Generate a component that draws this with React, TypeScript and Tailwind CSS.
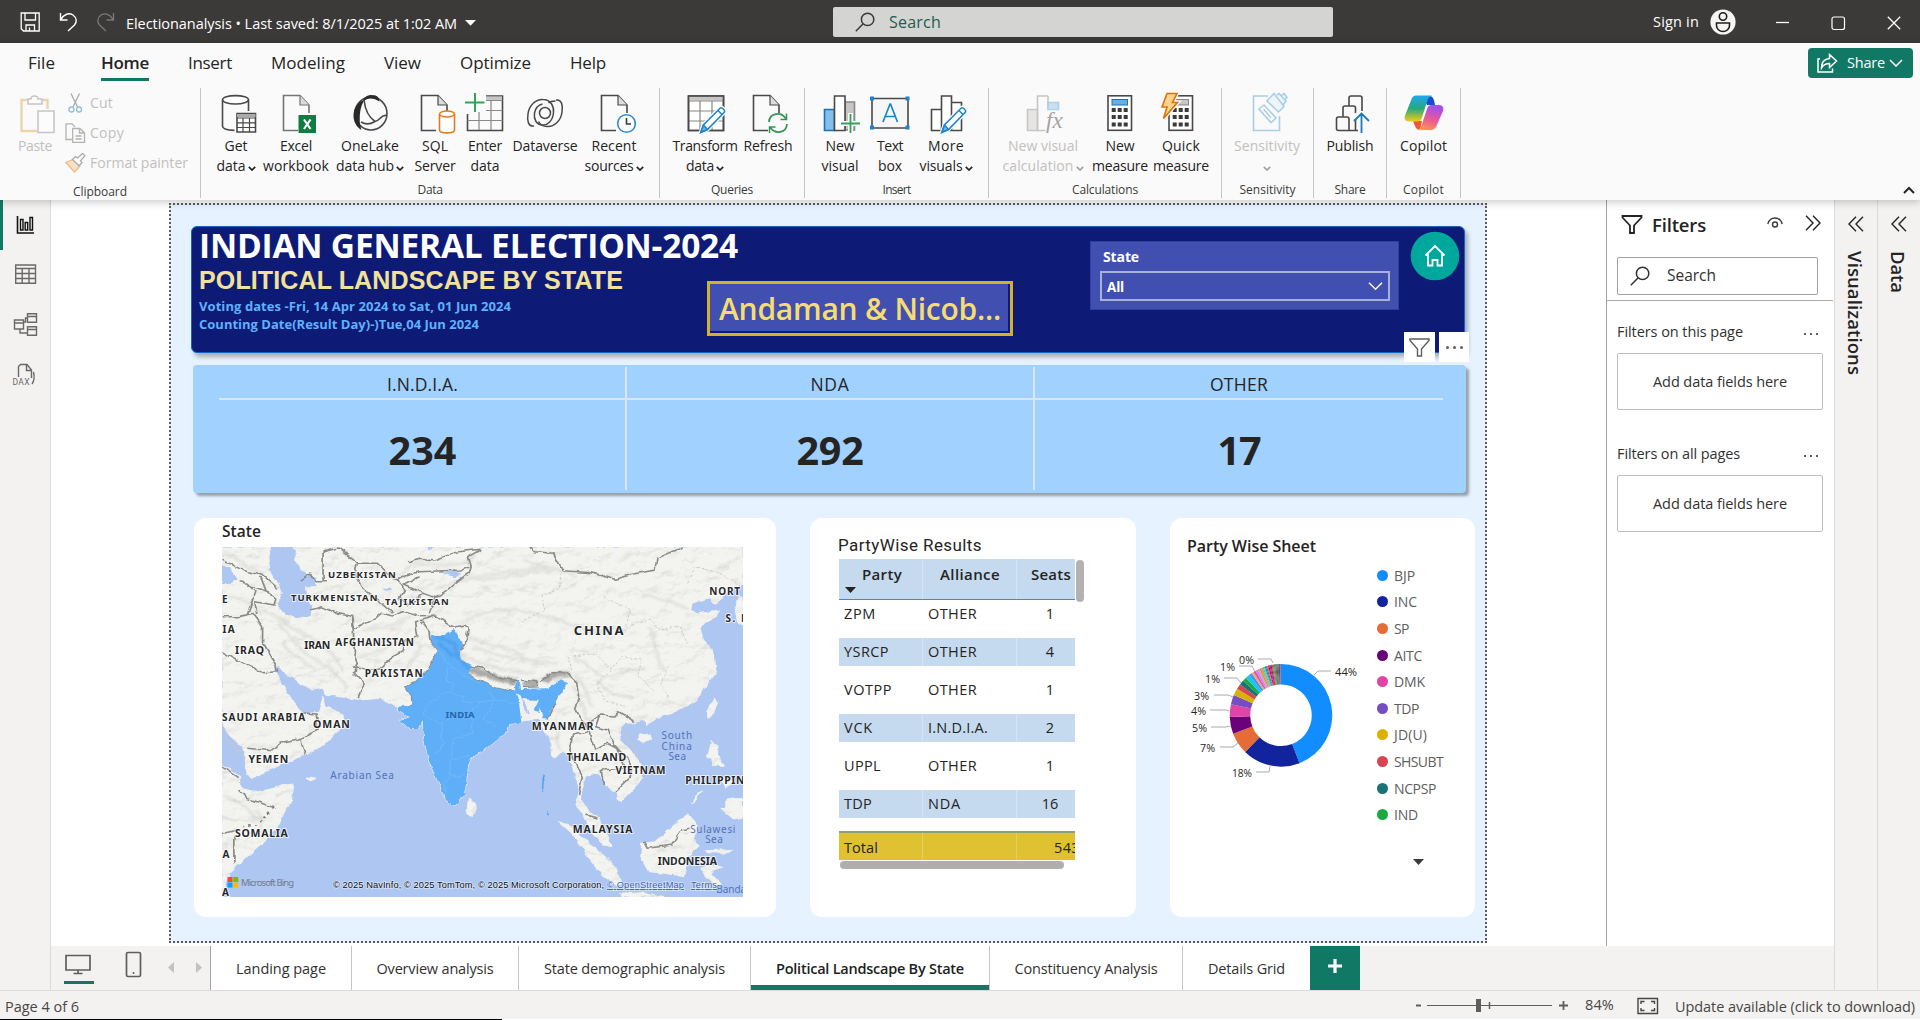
import { useLayoutEffect, useRef } from "react";
import type { ReactNode } from "react";

/* Text whose tracking is tuned so that it spans exactly `w` pixels. */
function Fit({ w, className = "", children }: { w: number; className?: string; children: string }) {
  const ref = useRef<HTMLSpanElement>(null);
  useLayoutEffect(() => {
    const el = ref.current;
    if (!el) return;
    el.style.letterSpacing = "0px";
    const vertical = getComputedStyle(el).writingMode !== "horizontal-tb";
    const box = el.getBoundingClientRect();
    const natural = vertical ? box.height : box.width;
    el.style.letterSpacing = `${(w - natural) / children.length}px`;
  }, [w, children]);
  return (
    <span ref={ref} className={`inline-block w-max shrink-0 whitespace-pre ${className}`}>
      {children}
    </span>
  );
}

const Chev = ({ className = "" }: { className?: string }) => (
  <svg className={`inline-block h-[5px] w-[8px] ${className}`} viewBox="0 0 8 5" fill="none" stroke="currentColor" strokeWidth="1.7">
    <path d="M.8 .8 4 4 7.2 .8" />
  </svg>
);

const Magnifier = ({ className = "" }: { className?: string }) => (
  <svg className={`h-5 w-5 ${className}`} viewBox="0 0 20 20" fill="none" stroke="currentColor" strokeWidth="1.5">
    <circle cx="12.6" cy="7.4" r="6.2" />
    <path d="M8.2 11.8 .8 19.2" />
  </svg>
);

/* ---------- title bar ---------- */
function TitleBar() {
  return (
    <div className="flex h-[43px] shrink-0 items-center bg-[#3b3a38] text-white">
      <svg className="ml-[20px] h-5 w-[21px]" viewBox="0 0 21 20" fill="none" stroke="#fff" strokeWidth="1.3">
        <path d="M1.2 1h18v18H3.5l-2.3-2.3zM5 1v7h10.500V1M6 19v-6h8.500v6M9.500 19v-3.500" />
      </svg>
      <svg className="ml-[18px] h-[20px] w-[19px]" viewBox="0 0 19 20" fill="none" stroke="#fff" strokeWidth="1.4">
        <path d="M1.500 1v7h7M1.800 7.700C5 2 10 .5 14 3c4 3 4 7 1.500 10L9 19" />
      </svg>
      <svg className="ml-[18px] h-[20px] w-[19px]" viewBox="0 0 19 20" fill="none" stroke="#7a7977" strokeWidth="1.3">
        <path d="M17.500 1v7h-7M17.200 7.700C14 2 9 .5 5 3c-4 3-4 7-1.500 10L10 19" />
      </svg>
      <Fit w={331} className="mt-[4px] ml-[11px] text-[14.500px]">Electionanalysis • Last saved: 8/1/2025 at 1:02 AM</Fit>
      <svg className="mt-[2px] ml-[8px] h-[6px] w-[11px]" viewBox="0 0 11 6"><path d="M0 0h11L5.500 5.800z" fill="#fff" /></svg>
      <div className="ml-[357px] flex h-[30px] w-[500px] items-center rounded-[2px] bg-[#d4d4d2] text-[#3b3a39]">
        <Magnifier className="ml-[22px]" />
        <Fit w={52} className="mt-[1px] ml-[14px] text-[16px] text-[#215c50]">Search</Fit>
      </div>
      <Fit w={46} className="ml-[320px] text-[14.500px]">Sign in</Fit>
      <svg className="ml-[11px] h-[26px] w-[26px]" viewBox="0 0 26 26">
        <circle cx="13" cy="13" r="12.600" fill="#f6f5f4" />
        <g fill="none" stroke="#1f1e1d" strokeWidth="1.600">
          <circle cx="13" cy="7.500" r="3.700" />
          <path d="M6.500 14h13v2.500a6.500 6 0 0 1-13 0z" />
        </g>
      </svg>
      <svg className="ml-[40px] h-[14px] w-[14px]" viewBox="0 0 14 14" stroke="#fff" strokeWidth="1.300"><path d="M0 7.500h13" /></svg>
      <svg className="mt-[3px] ml-[41px] h-[15px] w-[15px]" viewBox="0 0 15 15" fill="none" stroke="#fff" strokeWidth="1.200"><rect x="1" y="1" width="12.500" height="12.500" rx="2" /></svg>
      <svg className="mt-[3px] ml-[41px] h-[14px] w-[14px]" viewBox="0 0 14 14" stroke="#fff" strokeWidth="1.300"><path d="m.8.8 12.400 12.400M13.200.8.8 13.200" /></svg>
    </div>
  );
}

/* ---------- ribbon ---------- */
function MenuRow() {
  return (
    <div className="flex h-[41px] items-start text-[17px] leading-[40px] text-[#252423]">
      <Fit w={27} className="ml-[28px]">File</Fit>
      <div className="ml-[46px] flex flex-col">
        <Fit w={48} className="h-[35px] font-semibold">Home</Fit>
        <div className="h-[3px] w-[48px] bg-[#117865]" />
      </div>
      <Fit w={44} className="ml-[39px]">Insert</Fit>
      <Fit w={74} className="ml-[39px]">Modeling</Fit>
      <Fit w={37} className="ml-[39px]">View</Fit>
      <Fit w={71} className="ml-[39px]">Optimize</Fit>
      <Fit w={36} className="ml-[39px]">Help</Fit>
      <div className="mt-[5px] mr-[7px] ml-auto flex h-[30px] w-[105px] items-center rounded-[4px] bg-[#117865] text-white">
        <svg className="ml-[9px] h-[20px] w-[21px]" viewBox="0 0 21 20" fill="none" stroke="#fff" strokeWidth="1.500">
          <path d="M3 6H1v13h14.500v-3.500M12.500 1.500v4C7 6 4.500 9.500 4.500 15c2-3.500 4.500-4.500 8-4.500v4L19.500 8z" />
        </svg>
        <Fit w={38} className="ml-[9px] text-[14.500px]">Share</Fit>
        <svg className="ml-[4px] h-[8px] w-[14px]" viewBox="0 0 14 8" fill="none" stroke="#fff" strokeWidth="1.500"><path d="m1 1 6 6 6-6" /></svg>
      </div>
    </div>
  );
}

/* Icon frame, 44 by 46, centred on horizontal position c of the ribbon. */
const Ico = ({ c, children }: { c: number; children: ReactNode }) => (
  <svg className="h-[46px] w-[44px]" viewBox={`${c - 22} 90 44 46`} fill="none" stroke="#4a4948" strokeWidth="1.600">
    {children}
  </svg>
);

const Doc = ({ x, stroke = "#4a4948" }: { x: number; stroke?: string }) => (
  <g stroke={stroke}>
    <path d={`M${x + 15} 130.500H${x}.5V95.500H${x + 17}L${x + 26} 105V113`} />
    <path d={`M${x + 17} 95.500V105H${x + 26}`} fill="#dcdcdc" strokeWidth="1.200" />
  </g>
);

const Pencil = ({ x }: { x: number }) => (
  <g transform={`translate(${x} 107)`} stroke="#1b84cc" strokeWidth="1.500">
    <path d="M20.500.8c1.500-.8 5 2.500 3.800 4.500L7.500 22.500.8 25.300 3.500 18z" fill="#fff" stroke="#fafafa" strokeWidth="4" />
    <path d="M20.500.8c1.500-.8 5 2.500 3.800 4.500L7.500 22.500.8 25.300 3.500 18z" fill="#fff" />
    <path d="M3.500 18l4 4.500L.8 25.300z" fill="#74b5e8" />
    <path d="m18 3.500 4.200 4.200" />
  </g>
);

const CalcIcon = ({ x, display }: { x: number; display: string }) => (
  <g>
    <rect x={x} y="95.800" width="23.500" height="34.500" fill="#fff" />
    <rect x={x + 4} y="99.500" width="15.500" height="5.500" fill={display} stroke={display === "#c8c6c4" ? "#8a8886" : "#1b72b8"} strokeWidth="1" />
    <g stroke="none" fill="#3b3a39">
      {[108, 115, 122.500].map((y) => [4, 10, 16].map((d) => <rect key={`${y}-${d}`} x={x + d - 0.300} y={y} width="4" height="4" />))}
    </g>
  </g>
);

const PlainLabel = "leading-[20px] text-[14px]";

function Item({ box, l1, w1, l2, w2, chev, dim, children }: {
  box: string; l1: string; w1: number; l2?: string; w2?: number; chev?: boolean; dim?: boolean; children: ReactNode;
}) {
  return (
    <div className={`flex shrink-0 flex-col items-center ${box} ${dim ? "text-[#c2c0be]" : "text-[#252423]"}`}>
      {children}
      <Fit w={w1} className={PlainLabel}>{l1}</Fit>
      <div className="flex h-5 items-center justify-center gap-[2px]">
        {l2 && <Fit w={w2 ?? 30} className={PlainLabel}>{l2}</Fit>}
        {chev && <Chev className={`mt-[4px] ${dim ? "text-[#a5a3a1]" : ""}`} />}
      </div>
    </div>
  );
}

function Group({ width, label, lw, children }: { width: string; label: string; lw: number; children: ReactNode }) {
  return (
    <div className={`flex h-[110px] shrink-0 flex-col border-r border-[#c8c6c4] ${width}`}>
      <div className="mt-[2px] flex h-[93px]">{children}</div>
      <div className="flex justify-center">
        <Fit w={lw} className="text-[12px] leading-[17px] text-[#3b3a39]">{label}</Fit>
      </div>
    </div>
  );
}

function Ribbon() {
  return (
    <div className="flex h-[116px] items-start pt-[4px]">
      <Group width="w-[201px]" label="Clipboard" lw={54}>
        <div className="ml-[13px] flex w-[44px] flex-col items-center text-[#c2c0be]">
          <Ico c={35}>
            <g opacity=".4">
              <path d="M30 100H21.500v31H37M47.500 109v-9H39" stroke="#d99a3c" strokeWidth="2.400" />
              <path d="M28 104v-5h3c0-4 7-4 7 0h4v5z" stroke="#777" fill="#fff" />
              <path d="M38 111h16v21.500H38z" fill="#fff" stroke="#777" />
            </g>
          </Ico>
          <Fit w={34} className={PlainLabel}>Paste</Fit>
        </div>
        <div className="ml-[8px] flex flex-col text-[#c2c0be]">
          <div className="mt-[3px] flex h-[30px] items-start">
            <svg className="h-[20px] w-[20px]" viewBox="0 0 20 20" fill="none" stroke="#aaa" strokeWidth="1.300">
              <path d="m6 .5 6.500 13.500M14.500.5 8 14" /><g stroke="#90bfdf"><circle cx="6.500" cy="16.500" r="2.500" /><circle cx="14" cy="16.500" r="2.500" /></g>
            </svg>
            <Fit w={23} className="ml-[5px] text-[14px] leading-[19px]">Cut</Fit>
          </div>
          <div className="flex h-[30px] items-start">
            <svg className="h-[20px] w-[21px]" viewBox="0 0 21 20" fill="none" stroke="#b5b3b1" strokeWidth="1.300">
              <path d="M7.500 16.500H1V.8h6l3 3" /><path d="M7.700 5.500h7.300l4.500 4.500v9.500H7.700zM14.500 5.500V10h5M10.500 13h6M10.500 16h6" />
            </svg>
            <Fit w={34} className="ml-[4px] text-[14px] leading-[20px]">Copy</Fit>
          </div>
          <div className="flex h-[30px] items-start">
            <svg className="h-[20px] w-[21px]" viewBox="0 0 21 20" fill="none" strokeWidth="1.300">
              <path d="M.8 9.500 8 6.500l7 6.500-5.500 6z" fill="#f9e0c4" stroke="#e9bb8a" /><path d="m7.500 6.500 3-3 2 1.500 5-4.500 2.300 2.300-4.300 5 1.500 2-3 3z" fill="#fff" stroke="#aaa" />
            </svg>
            <Fit w={98} className="ml-[4px] text-[14px] leading-[20px]">Format painter</Fit>
          </div>
        </div>
      </Group>

      <Group width="w-[459px]" label="Data" lw={25}>
        <Item box="ml-[7px] w-[56px]" l1="Get" w1={23} l2="data" w2={29} chev>
          <Ico c={236}>
            <ellipse cx="235.500" cy="99.800" rx="13" ry="4.200" fill="#fff" />
            <path d="M222.500 100v26c0 3 5 4.300 12 4.400M248.500 100v11" />
            <path d="M237 113.500h18.500V132H237z" fill="#fff" /><path d="M237 114h18.500v3H237z" fill="#aaa" stroke="none" />
            <path d="M237 118h18.500M237 122.800h18.500M237 127.500h18.500M243 118v14M249.500 118v14" strokeWidth="1.200" />
          </Ico>
        </Item>
        <Item box="w-[64px]" l1="Excel" w1={32} l2="workbook" w2={66}>
          <Ico c={296}>
            <Doc x={283} stroke="#767574" />
            <path d="M298.500 115H316v18h-17.500z" fill="#107c41" stroke="none" />
            <path d="m304 119.500 6.500 9.500M310.500 119.500 304 129" stroke="#fff" strokeWidth="2.200" />
          </Ico>
        </Item>
        <Item box="ml-[6px] w-[72px]" l1="OneLake" w1={58} l2="data hub" w2={58} chev>
          <Ico c={370}>
            <ellipse cx="371" cy="113.500" rx="16" ry="16.500" />
            <path d="M364 100c1-3 5-4.500 8-4.300 3 0 6 1.500 6.500 4.300-5-3-11-3-14.500 0zM362.500 101.500c-10 5-11 20-2.500 26.500-2-7-1.500-19 2.500-26.500z" fill="#2b2a29" stroke="#2b2a29" />
            <path d="M364 100c1 9 4.500 17 11 21.500-5 3-10 3-14 .5M375 121.500c6-1.500 6-7.500 12-6" />
          </Ico>
        </Item>
        <Item box="ml-[4px] w-[50px]" l1="SQL" w1={26} l2="Server" w2={41}>
          <Ico c={435}>
            <Doc x={421} />
            <path d="M439.500 114v16c0 3.800 15 3.800 15 0v-16" fill="#fff" stroke="#e07b1c" /><ellipse cx="447" cy="114" rx="7.500" ry="3" fill="#fff" stroke="#e07b1c" />
          </Ico>
        </Item>
        <Item box="w-[50px]" l1="Enter" w1={34} l2="data" w2={29}>
          <Ico c={485}>
            <path d="M467.500 114v16.500h35V96H486" fill="none" /><path d="M486 96.500h16V100h-16z" fill="#c8c6c4" stroke="none" />
            <path d="M486 100.500h16.500M486 110.500h16.500M467.500 120.500h35M479 112v18M491 100v30" strokeWidth="1.200" stroke="#8a8886" />
            <path d="M475 93v19M465 102.500h19.500" stroke="#32a35a" strokeWidth="2" />
          </Ico>
        </Item>
        <Item box="w-[70px]" l1="Dataverse" w1={65}>
          <Ico c={545}>
            <g strokeWidth="1.500">
              <circle cx="545" cy="113" r="5.500" />
              <path d="M534 126c-6 1-7-6-6-12 1-9 8-15 15-14.500 8 0 11 7 10.500 13-.5 8-6 13-11 12.500-6 0-9-6-8-12 1-5 4-8 8-9" />
              <path d="M556 100c6-1 7 6 6 12-1 9-8 15-15 14.500-4 0-7-2-8.500-5M555.500 101c0 0-5 0-7 2" />
            </g>
          </Ico>
        </Item>
        <Item box="ml-[1px] w-[66px]" l1="Recent" w1={45} l2="sources" w2={49} chev>
          <Ico c={614}>
            <Doc x={601} />
            <circle cx="626.500" cy="123.500" r="8.800" fill="#fff" stroke="#2d8dd0" /><path d="M626.500 118v6h4.500" stroke="#3b3a39" />
          </Ico>
        </Item>
      </Group>

      <Group width="w-[145px]" label="Queries" lw={42}>
        <Item box="ml-[10px] w-[70px]" l1="Transform" w1={65} l2="data" w2={28} chev>
          <Ico c={705}>
            <path d="M688.500 96h35v34.500h-35z" fill="#fff" /><path d="M689 96.500h34v4h-34z" fill="#c8c6c4" stroke="none" />
            <path d="M688.500 101h35M688.500 111h35M688.500 121h35M700 101v29M712 101v29" stroke="#8a8886" strokeWidth="1.200" />
            <path d="M688.500 96h35v34.500h-35z" />
            <Pencil x={700} />
          </Ico>
        </Item>
        <Item box="w-[56px]" l1="Refresh" w1={49}>
          <Ico c={768}>
            <Doc x={753} />
            <g stroke="#349653" strokeWidth="1.800"><path d="M769 122c.5-9 12-11 17-3M787 124c-.5 9-12 11-17 3" /><path d="M786.500 113.500v6h-6M769.500 133v-6h6" strokeWidth="1.500" /></g>
          </Ico>
        </Item>
      </Group>

      <Group width="w-[184px]" label="Insert" lw={28}>
        <Item box="ml-[13px] w-[44px]" l1="New" w1={29} l2="visual" w2={37}>
          <Ico c={840}>
            <path d="M824.500 109.500h10v21h-10z" fill="#83beec" stroke="#1f6fb2" /><path d="M845 102h9.500v28H845z" fill="#c8c6c4" stroke="#8a8886" />
            <path d="M834.500 96H845v34.500h-10.500z" fill="#fff" />
            <path d="M850.500 113v21M841 123.500h19.500" stroke="#fafafa" strokeWidth="5" /><path d="M850.500 114v19M841 123.500h19" stroke="#32a35a" strokeWidth="1.800" />
          </Ico>
        </Item>
        <Item box="ml-[6px] w-[44px]" l1="Text" w1={26} l2="box" w2={24}>
          <Ico c={890}>
            <path d="M872 98.500h36V128h-36z" fill="#f6f6f6" /><path d="m883 122 7-18h.5l7 18M885.500 116.500h10" stroke="#1b84cc" strokeWidth="1.700" />
            <g fill="#1b84cc" stroke="none"><path d="M870 96.500h4v4h-4zM905.500 96.500h4v4h-4zM870 125.500h4v4h-4zM905.500 125.500h4v4h-4z" /></g>
          </Ico>
        </Item>
        <Item box="ml-[2px] w-[64px]" l1="More" w1={36} l2="visuals" w2={43} chev>
          <Ico c={946}>
            <path d="M931.500 109.500h10v21h-10zM951.500 102.500h10v28h-10zM941.500 96h10v34.500h-10z" fill="#fff" />
            <Pencil x={941} />
          </Ico>
        </Item>
      </Group>

      <Group width="w-[233px]" label="Calculations" lw={66}>
        <Item box="ml-[10px] w-[88px]" l1="New visual" w1={70} l2="calculation" w2={71} chev dim>
          <Ico c={1043}>
            <path d="M1027.500 109.500h10v21h-10z" fill="#e6e5e4" stroke="#c8c6c4" /><path d="M1048 102.500h10.500v7h-10.500z" fill="#c6e0f4" stroke="#aed2ee" />
            <path d="M1048 96h-10.500v34.500h8" stroke="#c8c6c4" /><path d="M1048 96v12" stroke="#c8c6c4" />
            <text x="1046" y="128" fontFamily="Liberation Serif" fontStyle="italic" fontSize="23" fill="#a5a3a1" stroke="none">fx</text>
          </Ico>
        </Item>
        <Item box="ml-[3px] w-[60px]" l1="New" w1={29} l2="measure" w2={56}>
          <Ico c={1120}><CalcIcon x={1108} display="#69afe5" /></Ico>
        </Item>
        <Item box="ml-[1px] w-[60px]" l1="Quick" w1={38} l2="measure" w2={56}>
          <Ico c={1181}>
            <CalcIcon x={1169} display="#c8c6c4" />
            <path d="M1167 93.500h10l-4.500 9h5l-14 16 3.500-11.500h-5z" stroke="#fafafa" strokeWidth="4" />
            <path d="M1167 93.500h10l-4.500 9h5l-14 16 3.500-11.500h-5z" fill="#fbd38a" stroke="#d9730d" />
          </Ico>
        </Item>
      </Group>

      <Group width="w-[92px]" label="Sensitivity" lw={56}>
        <Item box="ml-[10px] w-[70px]" l1="Sensitivity" w1={66} chev dim>
          <Ico c={1267}>
            <g stroke="#a9cfe8"><path d="M1268 96h-14.500v34.500h26V116" fill="none" />
              <path d="m1259 109 5-4 12 13-5 4.500zM1263.500 109l7.500 9" fill="#fff" /><path d="m1267 101 7-7.500 10 13-5.500 5.500zM1277 95l2-1.500 7 7.500-2.500 3.500M1281 96l3-2.500 3 4-2.500 2.500" fill="#eef6fc" />
            </g>
          </Ico>
        </Item>
      </Group>
      <Group width="w-[73px]" label="Share" lw={31}>
        <Item box="w-[72px]" l1="Publish" w1={47}>
          <Ico c={1350}>
            <path d="M1349 130.500h-10.500a2 2 0 0 1-2-2v-9.500a2 2 0 0 1 2-2h8.500a2 2 0 0 1 2 2v11.500h9M1343 116.500V108a2 2 0 0 1 2-2h8.500a2 2 0 0 1 2 2v5M1355.500 130v-11M1349 106v-8a2 2 0 0 1 2-2h9a2 2 0 0 1 2 2v13" />
            <path d="M1361.500 133v-19M1354 121l7.500-7.500 7.500 7.500" stroke="#1b7bbd" strokeWidth="1.800" />
          </Ico>
        </Item>
      </Group>
      <Group width="w-[74px]" label="Copilot" lw={41}>
        <Item box="w-[73px]" l1="Copilot" w1={47}>
          <Ico c={1423}>
            <defs>
              <linearGradient id="cpA" x1="0" y1="0" x2="0" y2="1"><stop offset="0" stopColor="#1fa6f5" /><stop offset=".5" stopColor="#27a87c" /><stop offset="1" stopColor="#f3cd18" /></linearGradient>
              <linearGradient id="cpB" x1=".3" y1="0" x2="0" y2="1"><stop offset="0" stopColor="#a84fe8" /><stop offset=".5" stopColor="#ee5a92" /><stop offset="1" stopColor="#fda44b" /></linearGradient>
            </defs>
            <g stroke="none">
              <path d="M1422 96h6c4 0 5 3 6 9h-8z" fill="#1a4bd0" />
              <path d="M1412 121h9l-2 9c-4 0-5-4-7-9z" fill="#ef5a35" />
              <path d="M1411 98c1-2 3-2.500 5-2.500h15c-3 1-4 3-5 6l-5 16c-1 3-2 4-5 4h-8c-4 0-5-3-4-6z" fill="url(#cpA)" />
              <path d="M1435 127c-1 2-3 3-5 3h-14c3-1 4-3 5-6l5-15c1-3 2-4 5-4h7c4 0 5 3 4 6z" fill="url(#cpB)" />
            </g>
          </Ico>
        </Item>
      </Group>
      <svg className="mt-[98px] mr-[5px] ml-auto h-[8px] w-[12px]" viewBox="0 0 12 8" fill="none" stroke="#252423" strokeWidth="2"><path d="m1 7 5-5 5 5" /></svg>
    </div>
  );
}

/* ---------- map ---------- */
const LAND =
  "M84 111H1445V222L1432 230 1400 245 1388 268 1372 280 1360 263 1340 268 1312 280 1308 300 1325 312 1345 308 1385 303 1375 320 1345 335 1332 352 1340 385 1358 408 1370 440 1374 480 1350 520 1335 555 1300 588 1260 610 1215 625 1193 648 1185 630 1160 638 1140 640 1120 665 1125 690 1150 720 1175 760 1180 805 1165 830 1125 878 1112 868 1118 850 1085 825 1070 795 1048 792 1036 795 1030 820 1020 850 1022 870 1042 905 1070 925 1085 965 1100 1010 1082 1005 1045 955 1030 915 1008 885 1016 830 1000 775 990 735 975 722 958 742 945 738 942 690 925 665 915 625 885 628 862 638 835 642 830 662 775 713 735 745 727 765 722 820 716 855 700 882 683 890 668 870 650 820 625 755 612 690 608 630 598 655 575 655 550 630 572 622 543 602 540 592 515 575 500 562 435 568 390 560 358 552 345 535 320 540 285 515 258 498 235 465 218 482 235 512 262 560 285 600 300 612 335 607 350 557 355 590 400 612 402 642 370 683 330 720 300 733 245 762 160 802 150 796 145 750 138 712 108 680 84 640Z" +
  "M84 765 105 775 130 800 130 825 150 842 175 847 250 826 272 822 265 870 235 940 190 1000 130 1060 105 1090 92 1130 84 1150Z";

const ISLANDS =
  "M728 865 742 880 748 905 735 922 723 912ZM1368 565 1378 575 1368 610 1358 625 1350 600ZM1175 675 1200 672 1203 688 1185 698 1172 690Z" +
  "M962 935 990 945 1030 985 1075 1030 1115 1075 1128 1120 1115 1130 1080 1095 1040 1040 1005 980Z" +
  "M1180 1000 1215 995 1250 960 1300 912 1330 955 1315 985 1330 1010 1300 1040 1290 1100 1240 1090 1200 1085 1178 1040Z" +
  "M1360 695 1382 705 1380 745 1395 770 1370 765 1350 740ZM1400 870 1440 865 1445 925 1420 930 1385 895 1400 890ZM1390 800 1420 815 1400 835ZM1340 840 1310 878 1318 862ZM1350 1022 1425 1018 1390 1030 1355 1028Z" +
  "M1335 1075 1360 1065 1390 1075 1360 1085 1385 1120 1370 1125 1345 1095ZM1125 1150 1180 1145 1240 1161 1130 1161ZM1425 300 1435 260 1445 262 1445 345 1430 335ZM305 804 325 806 318 812 306 810Z";

const SEAS =
  "M212 111H268L280 125 272 150 295 182 312 195 333 200 328 228 300 230 305 262 320 285 315 318 285 326 255 315 228 290 240 250 232 222 212 190 205 140Z" +
  "M84 165 108 178 125 205 100 222 84 222ZM662 190 690 180 712 188 690 202ZM505 232 530 238 515 242ZM620 111H635L628 125Z";

const INDIA =
  "M630 375 665 375 690 357 703 380 713 410 702 425 708 450 737 465 728 492 765 518 800 535 848 545 852 510 862 520 865 537 935 535 970 508 988 520 968 550 955 580 945 595 933 628 922 628 915 595 912 608 900 605 898 593 912 570 875 568 852 550 860 580 866 638 835 642 830 662 775 713 735 745 727 765 722 820 716 855 700 882 683 890 668 870 650 820 625 755 612 690 608 630 598 655 575 655 550 630 572 622 543 602 545 590 580 585 580 560 562 530 590 515 625 475 648 425 630 395Z";

const BORDERS = [
  "M348 215V125L388 114 440 160 490 160 525 205 545 210 555 200 600 185 710 180 735 170 730 190 700 215 675 240 640 265 625 310",
  "M290 210 315 192 332 215 358 215 M438 160 430 195 455 240 485 265 515 295 530 310",
  "M315 300 345 290 385 310 425 320 430 355 485 325 500 310 530 318 560 305 600 320 645 318 690 352 715 345 727 355 722 395 705 425",
  "M425 320 430 430 440 460 430 490 455 520 440 565 M440 460 425 475 495 478 530 440 555 425 560 395 595 380 590 335 640 318",
  "M605 335 625 365 628 395 650 425 620 480 590 515 562 530 580 560 580 585 543 597",
  "M545 210 560 240 545 265 570 285 610 250 560 225 600 200M610 250 645 265",
  "M888 111 900 125 950 130 975 182 1050 188 1110 208 1170 190 1215 180 1220 145 1290 111",
  "M735 170 728 140 760 118 700 125 640 150 600 145 570 155",
  "M728 468 765 475 800 500 845 510 860 515 M728 492 765 518 800 535 848 545 M865 510 905 515 910 530 870 532 M915 515 950 488 985 490 1010 515 1015 560 1005 600 1030 640",
  "M950 550 955 580 933 628M1030 640 1040 665 1000 675 990 720 1010 760 1025 800 1015 855",
  "M1030 645 1070 615 1110 618 1120 605 1160 635M1070 615 1060 650 1090 660 1105 700 1140 745 1155 770 1150 800 1110 845 M1045 665 1060 720 1090 700 1115 715 1135 775 1075 780 1080 825",
  "M84 320 125 320 165 310 190 350 190 395 205 425 225 470 230 485 190 488 130 455 84 425M150 315 160 280 170 245 150 220 130 215",
  "M84 150 150 185 190 195 230 235M150 225 205 245 225 265 220 285 170 275M200 245 185 200M170 275 175 315",
  "M290 608 330 612 335 660 290 685 300 733M290 685 235 700 215 722 150 715M84 768 125 800 M130 840 150 865 220 893M115 980V1060M84 970 125 960",
  "M1185 995 1195 1015 1260 1005 1285 960 1305 955M1035 915 1065 925",
];

const STATES =
  "M650 425 675 460 700 480M675 470 670 510 690 520 685 545 660 550 640 570M700 480 720 500 760 520M685 545 715 560 710 575 760 575 800 570 850 580M640 570 615 590 610 610 650 640 690 620 740 625 735 650 740 670 715 680 690 685 680 720 685 745 735 740M660 640 655 680 665 700 640 730M780 540 795 575 780 600 770 630 800 650M680 745 680 790 700 800 720 795M760 575 740 600 735 625M690 790 665 820 670 860";

const RELIEF = [
  "M700 430c60 40 120 50 200 60M720 380c60 30 100 20 150 60M740 410c80 40 140 40 220 50M720 330c50-30 120-40 180-20s120 50 200 60",
  "M640 240c80-40 150-50 240-60s90 0 130 20M740 210c60 0 130-20 200-30M560 170c60-20 120 10 180-20M870 150c40 10 80 30 110 40",
  "M1000 440c40 20 60 60 90 60s60-40 100-20M1010 500c20 20 30 60 40 90M1060 510c30 40 60 50 100 50M1200 350c20 40 10 90 40 130M1180 250c30 20 70 10 120 50",
  "M190 300c50 20 80 60 120 80s70 60 90 100M230 340c30 30 60 90 110 120s60 50 70 80M240 400c30 40 60 60 90 80M450 360c40 0 90-20 130-40M440 440c40-10 70-20 100-50M600 400c0 30-20 50-40 80",
  "M100 260c40 10 70 20 90 60M95 130c40 20 50 50 100 60M90 680c20 20 30 40 50 60M90 860c40 10 70 40 80 70M170 900c20 20 20 40 10 70M960 640c-5 30 0 60 10 80M1000 530c20 30 20 60 40 100M1130 660c10 30 40 50 40 90",
].join("");

type MapLabel = [text: string, x: number, y: number, w: number, size: number];
const COUNTRIES: MapLabel[] = [
  ["UZBEKISTAN", 361, 205, 177, 9.500], ["TURKMENISTAN", 264, 274, 226, 9.500], ["TAJIKISTAN", 510, 286, 166, 9.500],
  ["CHINA", 1003, 374, 130, 13], ["NORT", 1357, 254, 80, 10], ["S. K", 1399, 336, 58, 10],
  ["IA", 85, 369, 32, 10], ["E", 84, 279, 13, 10], ["IRAQ", 118, 431, 76, 10.500], ["IRAN", 299, 418, 68, 10.500], ["AFGHANISTAN", 380, 407, 205, 10],
  ["PAKISTAN", 457, 500, 151, 10], ["SAUDI ARABIA", 84, 633, 217, 10], ["OMAN", 322, 653, 96, 10.500],
  ["YEMEN", 153, 760, 104, 10.500], ["MYANMAR", 893, 659, 161, 10.500], ["THAILAND", 984, 754, 156, 10.500], ["VIETNAM", 1112, 793, 130, 10],
  ["PHILIPPIN", 1294, 823, 155, 10.500], ["MALAYSIA", 1000, 969, 156, 10.500], ["INDONESIA", 1222, 1064, 155, 10.500],
  ["SOMALIA", 118, 981, 138, 10.500], ["A", 85, 1045, 17, 10], ["A", 84, 1159, 13, 10],
];
const WATERS: MapLabel[] = [
  ["Arabian Sea", 367, 806, 166, 10], ["South", 1232, 687, 80, 10], ["China", 1232, 719, 79, 10], ["Sea", 1250, 751, 46, 10],
  ["Sulawesi", 1307, 969, 118, 10], ["Sea", 1346, 1000, 46, 10], ["Banda", 1375, 1148, 78, 10],
];
const mx = (x: number) => (x - 84) / 2.612;
const my = (y: number) => (y - 111) / 3;

function StateMap() {
  return (
    <svg className="ml-[28px] h-[350px] w-[521px]" viewBox="0 0 521 350" fontFamily="Noto Sans, sans-serif">
      <defs>
        <filter id="relief" x="0" y="0" width="100%" height="100%">
          <feTurbulence type="fractalNoise" baseFrequency=".045 .07" numOctaves="5" seed="11" result="n" />
          <feDiffuseLighting in="n" surfaceScale="5" diffuseConstant="1.18" lightingColor="#fff"><feDistantLight azimuth="235" elevation="58" /></feDiffuseLighting>
        </filter>
        <filter id="rough" x="-5%" y="-5%" width="110%" height="110%">
          <feTurbulence type="fractalNoise" baseFrequency=".12" numOctaves="2" seed="3" result="n" />
          <feDisplacementMap in="SourceGraphic" in2="n" scale="5" xChannelSelector="R" yChannelSelector="G" />
        </filter>
        <filter id="soft"><feGaussianBlur stdDeviation="3" /></filter>
        <clipPath id="landClip"><path transform="scale(.38285 .33333) translate(-84 -111)" d={LAND + ISLANDS} /></clipPath>
      </defs>
      <rect width="521" height="350" fill="#adc6f2" />
      <g filter="url(#rough)">
        <path transform="scale(.38285 .33333) translate(-84 -111)" d={LAND + ISLANDS} fill="#f1f0ec" stroke="#f1f0ec" strokeWidth="3" />
        <g clipPath="url(#landClip)">
          <rect width="521" height="350" filter="url(#relief)" opacity=".2" style={{ mixBlendMode: "multiply" }} />
        </g>
        <g transform="scale(.38285 .33333) translate(-84 -111)" fill="none">
          <path d={RELIEF} stroke="#c9c8c4" strokeWidth="9" opacity=".38" filter="url(#soft)" />
          <path d="M730 480c40 5 70 30 120 38M870 522h40M925 515c20-20 40-25 62-22" stroke="#8f8d89" strokeWidth="18" opacity=".7" filter="url(#soft)" />
          <path d={SEAS} fill="#adc6f2" />
          <path d={BORDERS.join("")} stroke="#8a8a88" strokeWidth="4.500" strokeLinejoin="round" />
          <path d="M970 180 965 240 920 255 925 300 860 340M1000 480 985 440 1060 430 1100 480 1130 440 1180 450 1170 500 1210 540M1080 260 1150 300 1140 350 1200 330 1230 360 1280 350 1300 400M1300 220 1320 170 1390 190 1440 230M1100 480 1060 520 1080 570 1140 590M1250 470 1230 520 1260 580" stroke="#bdbcb9" strokeWidth="2" strokeDasharray="7 5" />
          <path d="M220 893 200 915 175 945 140 950" stroke="#7d7d7b" strokeWidth="5" strokeDasharray="7 10" />
          <path d="M866 545 912 572 898 595 905 612 885 628 866 635 862 585Z" fill="#f1f0ec" />
          <path d="M866 560 880 600M874 575 886 612" stroke="#adc6f2" strokeWidth="4" />
          <path d={INDIA} fill="#5eaff8" />
          <path d="M640 378 690 400 700 440 730 475M650 400 690 440" stroke="#3d8fdc" strokeWidth="10" opacity=".45" filter="url(#soft)" />
          <path d={STATES} stroke="#7dbcf7" strokeWidth="1.800" />
          <path d="M926 793 920 820 918 846M938 907v6" stroke="#4ba3f5" strokeWidth="4" />
        </g>
      </g>
      <g fontWeight="700" fill="#26282b" stroke="#fff" strokeWidth="2" strokeOpacity=".75" paintOrder="stroke" strokeLinejoin="round">
        {COUNTRIES.map(([t, x, y, w, s], i) => (
          <text key={i} x={mx(x)} y={my(y)} fontSize={s} textLength={w / 2.612}>{t}</text>
        ))}
      </g>
      <text x={mx(668)} y={my(625)} fontSize="9.500" fontWeight="700" fill="#2267a8" textLength="29">INDIA</text>
      <g fill="#5373b4">
        {WATERS.map(([t, x, y, w, s], i) => (
          <text key={i} x={mx(x)} y={my(y)} fontSize={s} textLength={w / 2.612}>{t}</text>
        ))}
      </g>
      <g transform="translate(5.500 330)">
        <path d="M0 0h5v5H0z" fill="#f25022" /><path d="M5.700 0h5v5h-5z" fill="#7fba00" /><path d="M0 5.500h5v5H0z" fill="#00a4ef" /><path d="M5.700 5.500h5v5h-5z" fill="#ffb900" />
        <text x="13.500" y="8.800" fontSize="9.500" fill="#737b8a" textLength="53">Microsoft Bing</text>
      </g>
      <g fontFamily="Liberation Sans, sans-serif" fontSize="9.300" stroke="#fff" strokeWidth="1.500" strokeOpacity=".5" paintOrder="stroke">
        <text x="111" y="341" fill="#111" textLength="271">© 2025 NavInfo, © 2025 TomTom, © 2025 Microsoft Corporation,</text>
        <text x="385" y="341" fill="#3f5fae" textDecoration="underline" textLength="77">© OpenStreetMap</text>
        <text x="469" y="341" fill="#3f5fae" textDecoration="underline" textLength="26">Terms</text>
      </g>
    </svg>
  );
}

/* ---------- donut ---------- */
const SLICES: [number, string][] = [
  [240, "#118dff"], [99, "#12239e"], [37, "#e66c37"], [29, "#6b007b"], [22, "#e044a7"], [16, "#744ec2"], [12, "#d9b300"],
  [9, "#d64550"], [8, "#197278"], [7, "#1aab40"], [7, "#15c6f4"], [5, "#4092ff"], [4, "#ffa058"], [4, "#be5dc9"], [4, "#f472d0"],
  [3, "#b5a1ff"], [3, "#c4a200"], [3, "#ff8080"], [2, "#00dbbc"], [2, "#5bd667"], [2, "#0091d5"], [2, "#4668c5"], [2, "#ff6300"],
  [2, "#99008a"], [2, "#ec008c"], [2, "#533285"], [2, "#99700a"], [2, "#ff4141"], [2, "#1f9a85"], [2, "#25891c"], [2, "#3c5d8a"],
  [2, "#8a5a44"], [2, "#6e3b8c"], [1, "#a03a7a"], [1, "#6b6b6b"],
];
const DONUT_LABELS: [string, number, number, number, string][] = [
  ["44%", 1335, 675.500, 22, "M1314 675 1318 671H1331"], ["18%", 1232, 776.500, 20, "M1270 766 1269 772H1256"],
  ["7%", 1200, 751.500, 15, "M1238 743 1233 747H1220"], ["5%", 1192, 731.500, 15, "M1230 726 1226 727H1211"],
  ["4%", 1191, 714.500, 15, "M1229 711 1226 710H1210"], ["3%", 1194, 699.500, 15, "M1233 697 1228 695H1214"],
  ["1%", 1205, 682.500, 15, "M1241 683 1237 678H1224"], ["1%", 1220, 670.500, 15, "M1255 672 1252 666H1239"],
  ["0%", 1239, 663.500, 15, "M1273 663 1271 659H1258"],
];

function Donut() {
  const total = SLICES.reduce((s, [v]) => s + v, 0);
  let a = 0;
  const pt = (r: number, t: number) => `${(1281 + r * Math.sin(t)).toFixed(2)} ${(715.300 - r * Math.cos(t)).toFixed(2)}`;
  return (
    <svg className="h-[160px] w-[185px]" viewBox="1187 630 185 160" fontFamily="Open Sans, sans-serif">
      {SLICES.map(([v, color], i) => {
        const b = a + (v / total) * Math.PI * 2;
        const big = b - a > Math.PI ? 1 : 0;
        const d = `M${pt(51.300, a)}A51.300 51.300 0 ${big} 1 ${pt(51.300, b)}L${pt(30.800, b)}A30.800 30.800 0 ${big} 0 ${pt(30.800, a)}Z`;
        a = b;
        return <path key={i} d={d} fill={color} />;
      })}
      {DONUT_LABELS.map(([t, x, y, w, d], i) => (
        <g key={i}>
          <path d={d} fill="none" stroke="#aaa" strokeWidth="1" />
          <text x={x} y={y} fontSize="11.500" fill="#252423" textLength={w} lengthAdjust="spacingAndGlyphs">{t}</text>
        </g>
      ))}
    </svg>
  );
}

const LEGEND: [string, number, string][] = [
  ["BJP", 21, "bg-[#118dff]"], ["INC", 23, "bg-[#12239e]"], ["SP", 15, "bg-[#e66c37]"], ["AITC", 28, "bg-[#6b007b]"], ["DMK", 31, "bg-[#e044a7]"],
  ["TDP", 25, "bg-[#744ec2]"], ["JD(U)", 33, "bg-[#d9b300]"], ["SHSUBT", 49, "bg-[#d64550]"], ["NCPSP", 42, "bg-[#197278]"], ["IND", 24, "bg-[#1aab40]"],
];

/* ---------- report page ---------- */
const ROWS: [string, number, string, number, string][] = [
  ["ZPM", 32, "OTHER", 49, "1"], ["YSRCP", 45, "OTHER", 49, "4"], ["VOTPP", 48, "OTHER", 49, "1"],
  ["VCK", 29, "I.N.D.I.A.", 60, "2"], ["UPPL", 37, "OTHER", 49, "1"], ["TDP", 28, "NDA", 33, "16"],
];

function PartyTable() {
  return (
    <div className="ml-[29px] flex w-[246px] text-[14.500px] text-[#252423]">
      <div className="flex w-[236px] flex-col overflow-hidden">
        <div className="relative flex h-[41px] border-b border-[#2f8fe6] bg-[#c5daee] text-[15px] font-semibold">
          <div className="w-[84px] shrink-0 border-r border-[#d5e4f2] pl-[23px] leading-[31px]"><Fit w={40}>Party</Fit></div>
          <div className="w-[94px] shrink-0 border-r border-[#d5e4f2] pl-[17px] leading-[31px]"><Fit w={60}>Alliance</Fit></div>
          <div className="pl-[14px] leading-[31px]"><Fit w={40}>Seats</Fit></div>
          <svg className="absolute top-[28px] left-[6px] h-[6px] w-[11px]" viewBox="0 0 11 6"><path d="M0 0h11L5.500 6z" fill="#252423" /></svg>
        </div>
        {ROWS.map(([p, pw, a, aw, s], i) => (
          <div key={i} className="h-[38px] shrink-0">
            <div className={`flex h-[28px] leading-[28px] ${i % 2 ? "bg-[#c5daee]" : ""}`}>
              <div className={`w-[84px] shrink-0 pl-[5px] ${i % 2 ? "border-r border-[#d5e4f2]" : ""}`}><Fit w={pw}>{p}</Fit></div>
              <div className={`w-[94px] shrink-0 pl-[5px] ${i % 2 ? "border-r border-[#d5e4f2]" : ""}`}><Fit w={aw}>{a}</Fit></div>
              <div className="w-[66px] shrink-0 text-center">{s}</div>
            </div>
          </div>
        ))}
        <div className="mt-[3px] flex h-[29px] shrink-0 border-t-2 border-[#8aa27a] bg-[#dfc132] leading-[29px]">
          <div className="w-[84px] shrink-0 border-r border-[#e6cf60] pl-[5px]"><Fit w={34}>Total</Fit></div>
          <div className="w-[94px] shrink-0 border-r border-[#e6cf60]" />
          <div className="pl-[37px]"><Fit w={26}>543</Fit></div>
        </div>
        <div className="mt-[1px] ml-[1px] h-[8px] w-[224px] rounded-full bg-[#b0afad]" />
      </div>
      <div className="mt-[1px] ml-[1px] h-[42px] w-[8px] rounded-full bg-[#b3b2b0]" />
    </div>
  );
}

function Kpi({ label, lw, value, vw, box, line }: { label: string; lw: number; value: string; vw: number; box: string; line: string }) {
  return (
    <div className={`mt-[2px] flex h-[123px] shrink-0 flex-col items-center border-[#dbe6f0] ${box}`}>
      <Fit w={lw} className="h-[31px] text-[17.500px] leading-[34px]">{label}</Fit>
      <div className={`h-[2px] bg-[#dbe6f0] ${line}`} />
      <Fit w={vw} className="mt-[19px] text-[39.500px] leading-[62px] font-bold">{value}</Fit>
    </div>
  );
}

function ReportPage() {
  return (
    <div className="mt-[3px] ml-[118px] flex h-[740px] w-[1318px] flex-col border-2 border-dotted border-[#5c5b5a] bg-[#e6f2ff] pt-[21px] pl-[20px]">
      <div className="relative flex h-[127px] w-[1274px] rounded-[6px] border border-[#1565c0] bg-[#0d1b76] shadow-[3px_4px_4px_rgba(0,0,0,.28)]">
        <div className="flex w-[515px] flex-col pl-[7px] text-white">
          <Fit w={539} className="text-[33.500px] leading-[36px] font-bold">INDIAN GENERAL ELECTION-2024</Fit>
          <Fit w={424} className="font-['Liberation_Sans'] text-[25px] leading-[34px] font-bold text-[#f1e19b]">POLITICAL LANDSCAPE BY STATE</Fit>
          <Fit w={312} className="text-[13px] leading-[18px] font-bold text-[#5fb1fb]">Voting dates -Fri, 14 Apr 2024 to Sat, 01 Jun 2024</Fit>
          <Fit w={280} className="text-[13px] leading-[19px] font-bold text-[#5fb1fb]">Counting Date(Result Day)-)Tue,04 Jun 2024</Fit>
        </div>
        <div className="mt-[54px] flex h-[55px] w-[306px] items-center justify-center border-[3px] border-[#d2b12f] bg-[#414fb0] shadow-[inset_-2px_-2px_0_#0d1b76]">
          <Fit w={282} className="text-[30px] leading-[44px] font-semibold text-[#f6dd6f]">Andaman &amp; Nicob...</Fit>
        </div>
        <div className="mt-[14px] ml-[77px] flex h-[69px] w-[309px] flex-col border border-[#3040a0] bg-[#414fb1] pl-[9px] text-[14px] font-bold text-white">
          <Fit w={36} className="mt-[1px] ml-[3px] leading-[28px]">State</Fit>
          <div className="flex h-[30px] w-[290px] items-center justify-between border-2 border-[#a9afdb] px-[5px] pr-[5px]">
            <Fit w={17} className="mt-[3px] text-[13.500px]">All</Fit>
            <svg className="h-[8px] w-[15px]" viewBox="0 0 15 8" fill="none" stroke="#fff" strokeWidth="1.400"><path d="m1 .8 6.500 6.400L14 .8" /></svg>
          </div>
        </div>
        <svg className="mt-[4px] ml-[11px] h-[50px] w-[50px]" viewBox="0 0 50 50" fill="none">
          <circle cx="25" cy="25" r="24.300" fill="#00a79d" />
          <path d="M15.500 24.500 25 15l9.500 9.500M18 23v11.500h4.500V29h5v5.500H32V23" stroke="#fff" strokeWidth="1.800" />
        </svg>
        <div className="absolute top-[105px] left-[1212px] flex gap-[4px]">
          <div className="flex h-[30px] w-[31px] items-center justify-center bg-white">
            <svg className="h-[19px] w-[21px]" viewBox="0 0 21 19" fill="none" stroke="#605e5c" strokeWidth="1.400"><path d="M1 1h19v1.500L12.500 11v7h-4v-7L1 2.500z" /></svg>
          </div>
          <div className="flex h-[30px] w-[30px] items-center justify-center gap-[4px] bg-white">
            <i className="h-[3px] w-[3px] rounded-full bg-[#605e5c]" /><i className="h-[3px] w-[3px] rounded-full bg-[#605e5c]" /><i className="h-[3px] w-[3px] rounded-full bg-[#605e5c]" />
          </div>
        </div>
      </div>

      <div className="mt-[12px] ml-[2px] flex h-[128px] w-[1273px] shrink-0 rounded-[4px] bg-[#a0d1ff] text-[#252423] shadow-[3px_3px_3px_rgba(0,0,0,.35)]">
        <Kpi label="I.N.D.I.A." lw={71} value="234" vw={68} box="w-[434px] border-r-2 pl-[27px]" line="w-[407px]" />
        <Kpi label="NDA" lw={39} value="292" vw={67} box="w-[408px] border-r-2" line="w-full" />
        <Kpi label="OTHER" lw={58} value="17" vw={43} box="w-[408px]" line="w-full" />
      </div>

      <div className="mt-[25px] ml-[3px] flex text-[#252423]">
        <div className="flex h-[399px] w-[582px] flex-col rounded-[12px] bg-white">
          <Fit w={39} className="ml-[28px] h-[29px] text-[15.500px] leading-[26px] font-semibold">State</Fit>
          <StateMap />
        </div>
        <div className="ml-[34px] flex h-[399px] w-[326px] flex-col rounded-[12px] bg-white">
          <Fit w={144} className="ml-[28px] h-[41px] font-['Roboto'] text-[17px] leading-[54px]">PartyWise Results</Fit>
          <PartyTable />
        </div>
        <div className="ml-[34px] flex h-[399px] w-[305px] flex-col rounded-[12px] bg-white">
          <Fit w={129} className="ml-[17px] h-[44px] text-[16px] leading-[56px] font-semibold">Party Wise Sheet</Fit>
          <div className="ml-[17px] flex">
            <div className="mt-[68px] h-[160px] w-[185px]"><Donut /></div>
            <div className="ml-[5px] flex flex-col">
              {LEGEND.map(([t, w, dot]) => (
                <div key={t} className="flex h-[26.620px] items-center">
                  <i className={`h-[11px] w-[11px] rounded-full ${dot}`} />
                  <Fit w={w} className="ml-[6px] text-[14px] leading-[27px] text-[#605e5c]">{t}</Fit>
                </div>
              ))}
              <svg className="mt-[31px] ml-[36px] h-[6px] w-[11px]" viewBox="0 0 11 6"><path d="M0 0h11L5.500 6z" fill="#3b3a39" /></svg>
            </div>
          </div>
        </div>
      </div>
    </div>
  );
}

/* ---------- side areas ---------- */
function LeftRail() {
  return (
    <div className="flex w-[51px] shrink-0 border-r border-[#dddbd9] bg-[#f3f2f1]">
      <div className="h-[50px] w-[3px] bg-[#117865]" />
      <svg className="h-[200px] w-[47px]" viewBox="3 200 47 200" fill="none" stroke="#6b6967" strokeWidth="1.400">
        <g stroke="#111"><path d="M17.500 216v17H34" strokeWidth="1.600" /><path d="M20.500 219.500h2.500v10.500h-2.500zM25.200 222.500h2.500v7.500h-2.500zM30 217.500h2.500v12.500H30z" /></g>
        <path d="M15.700 265h19.800v18.300H15.700zM15.700 268.500h19.800M15.700 273.500h19.800M15.700 278.500h19.800M22.200 268.500v15M29 268.500v15" />
        <path d="M14.500 320h9v9h-9zM14.500 323h9M27.500 313.800h9v8.500h-9zM27.500 316.500h9M27.500 326.800h9v8.500h-9zM27.500 329.500h9M23.500 322h2v-4h2M20 329v4h7.500" />
        <path d="M18.500 377v-10.500l2-2h6.500l4.500 5.500v8M26.500 365v5.500h5M33.500 372c1 4 .5 9-1.500 12" />
        <text x="12.500" y="384.500" fontSize="8.500" stroke="none" fill="#6b6967" fontFamily="Roboto" textLength="17">DAX</text>
      </svg>
    </div>
  );
}

const Double = ({ flip }: { flip?: boolean }) => (
  <svg className="h-[16px] w-[16px]" viewBox="0 0 16 16" fill="none" stroke="#252423" strokeWidth="1.400">
    {flip ? <path d="m1 .8 7 7.200-7 7.200M8 .8 15 8l-7 7.200" /> : <path d="M15 .8 8 8l7 7.200M8 .8 1 8l7 7.200" />}
  </svg>
);

function FilterSection({ title, tw, gap }: { title: string; tw: number; gap: string }) {
  return (
    <div className={`ml-[10px] flex flex-col text-[14.500px] text-[#323130] ${gap}`}>
      <div className="flex h-[32px] w-[201px] items-start justify-between">
        <Fit w={tw} className="leading-[22px]">{title}</Fit>
        <div className="mt-[12px] flex gap-[4px]">
          <i className="h-[2px] w-[2px] bg-[#605e5c]" /><i className="h-[2px] w-[2px] bg-[#605e5c]" /><i className="h-[2px] w-[2px] bg-[#605e5c]" />
        </div>
      </div>
      <div className="flex h-[57px] w-[206px] items-center justify-center rounded-[2px] border border-[#c0bebc]">
        <Fit w={134}>Add data fields here</Fit>
      </div>
    </div>
  );
}

function Filters() {
  return (
    <div className="flex w-[227px] shrink-0 flex-col border-l border-[#a5a3a1] bg-white">
      <div className="flex h-[57px] items-start text-[#252423]">
        <svg className="mt-[15px] ml-[14px] h-[19px] w-[22px]" viewBox="0 0 22 19" fill="none" stroke="#252423" strokeWidth="1.800"><path d="M1.500 1h19v1.500L13 10.500v7.500H9v-7.500L1.500 2.500z" /></svg>
        <Fit w={54} className="mt-[11px] ml-[9px] text-[18.500px] leading-[28px] font-semibold">Filters</Fit>
        <svg className="mt-[17px] ml-[61px] h-[12px] w-[16px]" viewBox="0 0 16 12" fill="none" stroke="#3b3a39" strokeWidth="1.400"><path d="M.8 7C3-1 13-1 15.200 7" /><circle cx="8" cy="7.500" r="2.500" /></svg>
        <div className="mt-[15px] ml-[22px]"><Double flip /></div>
      </div>
      <div className="ml-[10px] flex h-[38px] w-[201px] items-center rounded-[2px] border border-[#a5a3a1] text-[#323130]">
        <Magnifier className="ml-[12px]" />
        <Fit w={49} className="ml-[17px] text-[15.500px]">Search</Fit>
      </div>
      <div className="mt-[5px] h-px bg-[#b0aeac]" />
      <FilterSection title="Filters on this page" tw={126} gap="mt-[20px]" />
      <FilterSection title="Filters on all pages" tw={123} gap="mt-[33px]" />
    </div>
  );
}

function SideTab({ label, w, box }: { label: string; w: number; box: string }) {
  return (
    <div className={`flex shrink-0 flex-col items-center border-l border-[#dddbd9] bg-[#f3f2f1] ${box}`}>
      <div className="mt-[16px]"><Double /></div>
      <Fit w={w} className="mt-[19px] mr-[3px] text-[18.500px] leading-[24px] font-semibold text-[#252423] [writing-mode:vertical-rl]">{label}</Fit>
    </div>
  );
}

/* ---------- page tabs and status ---------- */
const TABS: [string, number, string][] = [
  ["Landing page", 90, "w-[141px]"], ["Overview analysis", 117, "w-[167px]"], ["State demographic analysis", 181, "w-[232px]"],
  ["Political Landscape By State", 188, "w-[239px]"], ["Constituency Analysis", 143, "w-[193px]"], ["Details Grid", 77, "w-[128px]"],
];

function PageTabs() {
  return (
    <div className="flex h-[44px] bg-[#f3f2f1] text-[14.500px] text-[#323130]">
      <svg className="h-[44px] w-[159px]" viewBox="51 946 159 44" fill="none" stroke="#605e5c" strokeWidth="1.700">
        <path d="M66 955.500h24v14.500H66zM78 970v4M73.500 973.500h9" /><path d="M64 981h30v3H64z" fill="#117865" stroke="none" />
        <rect x="126.500" y="952.500" width="14" height="24" rx="1.500" /><circle cx="133.500" cy="973" r="1" fill="#605e5c" stroke="none" />
        <path d="M174 962v11l-6-5.500zM196 962v11l6-5.500z" fill="#c4c2c0" stroke="none" />
      </svg>
      {TABS.map(([t, w, box], i) => (
        <div key={t} className={`flex shrink-0 flex-col items-center border-l bg-white ${i ? "border-[#c8c6c4]" : "border-[#a5a3a1]"} ${box}`}>
          <Fit w={w} className={`h-[39px] leading-[45px] ${i === 3 ? "font-semibold text-[#201f1e]" : ""}`}>{t}</Fit>
          {i === 3 && <div className="h-[5px] w-full bg-[#117865]" />}
        </div>
      ))}
      <div className="flex w-[50px] items-center justify-center bg-[#117865]">
        <svg className="mb-[4px] h-[14px] w-[14px]" viewBox="0 0 14 14" stroke="#fff" strokeWidth="3.200"><path d="M7 0v14M0 7h14" /></svg>
      </div>
    </div>
  );
}

function StatusBar() {
  return (
    <div className="flex h-[30px] shrink-0 flex-col">
      <div className="flex h-[29px] items-center border-t border-[#dddbd9] bg-[#f3f2f1] text-[14.500px] text-[#484644]">
        <Fit w={74} className="mt-[3px] ml-[5px]">Page 4 of 6</Fit>
        <svg className="ml-auto h-[20px] w-[160px]" viewBox="1412 995 160 20" stroke="#605e5c" fill="none">
          <path d="M1416 1005.500h5" strokeWidth="2" /><path d="M1427 1005.500h125" strokeWidth="1.200" /><path d="M1478.500 999v13" strokeWidth="5" /><path d="M1489.500 1002v7" strokeWidth="1.500" />
          <path d="M1559 1005.500h9M1563.500 1001v9" strokeWidth="1.800" />
        </svg>
        <Fit w={29} className="ml-[13px]">84%</Fit>
        <svg className="mt-[2px] ml-[23px] h-[18px] w-[22px]" viewBox="0 0 22 18" fill="none" stroke="#484644" strokeWidth="1.400"><path d="M1 1.500h19.500v15H1z" /><path d="M4 7V4.500h3.500M14 4.500h3.500V7M17.500 11v2.500H14M7.500 13.500H4V11" /></svg>
        <Fit w={240} className="mt-[3px] mr-[5px] ml-[16px]">Update available (click to download)</Fit>
      </div>
      <div className="h-px w-[502px] bg-black" />
    </div>
  );
}

export default function App() {
  return (
    <div className="flex h-[1020px] w-[1920px] flex-col overflow-hidden bg-white font-['Open_Sans','Noto_Sans',sans-serif]">
      <TitleBar />
      <div className="z-10 h-[157px] shrink-0 bg-[#fafafa] shadow-[0_2px_8px_rgba(0,0,0,.22)]">
        <MenuRow />
        <Ribbon />
      </div>
      <div className="flex min-h-0 flex-1">
        <LeftRail />
        <div className="flex w-[1783px] shrink-0 flex-col">
          <div className="flex h-[746px]">
            <div className="w-[1555px] shrink-0"><ReportPage /></div>
            <Filters />
          </div>
          <PageTabs />
        </div>
        <SideTab label="Visualizations" w={124} box="w-[43px]" />
        <SideTab label="Data" w={42} box="w-[43px]" />
      </div>
      <StatusBar />
    </div>
  );
}
